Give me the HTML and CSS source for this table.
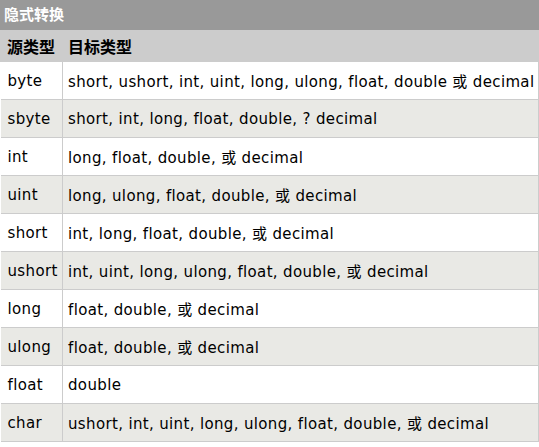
FILE: index.html
```html
<!DOCTYPE html>
<html>
<head>
<meta charset="utf-8">
<link rel="stylesheet" href="styles.css">
</head>
<body>
<div class="title">隐式转换</div>
<table class="conv">
  <thead>
    <tr class="head"><th class="src">源类型</th><th class="dst">目标类型</th></tr>
  </thead>
  <tbody>
    <tr class="w"><td class="src">byte</td><td class="dst">short, ushort, int, uint, long, ulong, float, double 或 decimal</td></tr>
    <tr class="g"><td class="src">sbyte</td><td class="dst">short, int, long, float, double, ? decimal</td></tr>
    <tr class="w"><td class="src">int</td><td class="dst">long, float, double, 或 decimal</td></tr>
    <tr class="g"><td class="src">uint</td><td class="dst">long, ulong, float, double, 或 decimal</td></tr>
    <tr class="w"><td class="src">short</td><td class="dst">int, long, float, double, 或 decimal</td></tr>
    <tr class="g"><td class="src">ushort</td><td class="dst">int, uint, long, ulong, float, double, 或 decimal</td></tr>
    <tr class="w"><td class="src">long</td><td class="dst">float, double, 或 decimal</td></tr>
    <tr class="g"><td class="src">ulong</td><td class="dst">float, double, 或 decimal</td></tr>
    <tr class="w"><td class="src">float</td><td class="dst">double</td></tr>
    <tr class="g"><td class="src">char</td><td class="dst">ushort, int, uint, long, ulong, float, double, 或 decimal</td></tr>
  </tbody>
</table>
</body>
</html>
```
FILE: styles.css
```css
html, body {
  margin: 0;
  padding: 0;
  background: #ffffff;
}
body {
  font-family: "DejaVu Sans", "Noto Sans CJK SC", sans-serif;
  color: #000;
}
.title {
  height: 30px;
  line-height: 28px;
  background: #999999;
  color: #ffffff;
  font-weight: bold;
  font-size: 15px;
  padding-left: 4px;
  font-family: "Noto Sans CJK SC", sans-serif;
}
.conv {
  width: 539px;
  border-collapse: collapse;
  table-layout: fixed;
}
.conv th {
  background: #cccccc;
  height: 31px;
  text-align: left;
  font-weight: bold;
  font-size: 16px;
  font-family: "Noto Sans CJK SC", sans-serif;
  padding: 0 0 0 6px;
  border: 1px solid #cccccc;
  border-top: none;
}
.conv th.dst { padding-left: 5px; }
.conv td {
  height: 37px;
  font-size: 15px;
  letter-spacing: 0.35px;
  padding: 0 0 0 7px;
  border: 1px solid #cccccc;
  white-space: nowrap;
  overflow: hidden;
}
.conv td.dst { padding-left: 5px; }
.conv .src { width: 55px; }
.conv tr.w td { background: #ffffff; }
.conv tr.g td { background: #e9e9e5; }
.conv td.src { border-left: none; }
```
